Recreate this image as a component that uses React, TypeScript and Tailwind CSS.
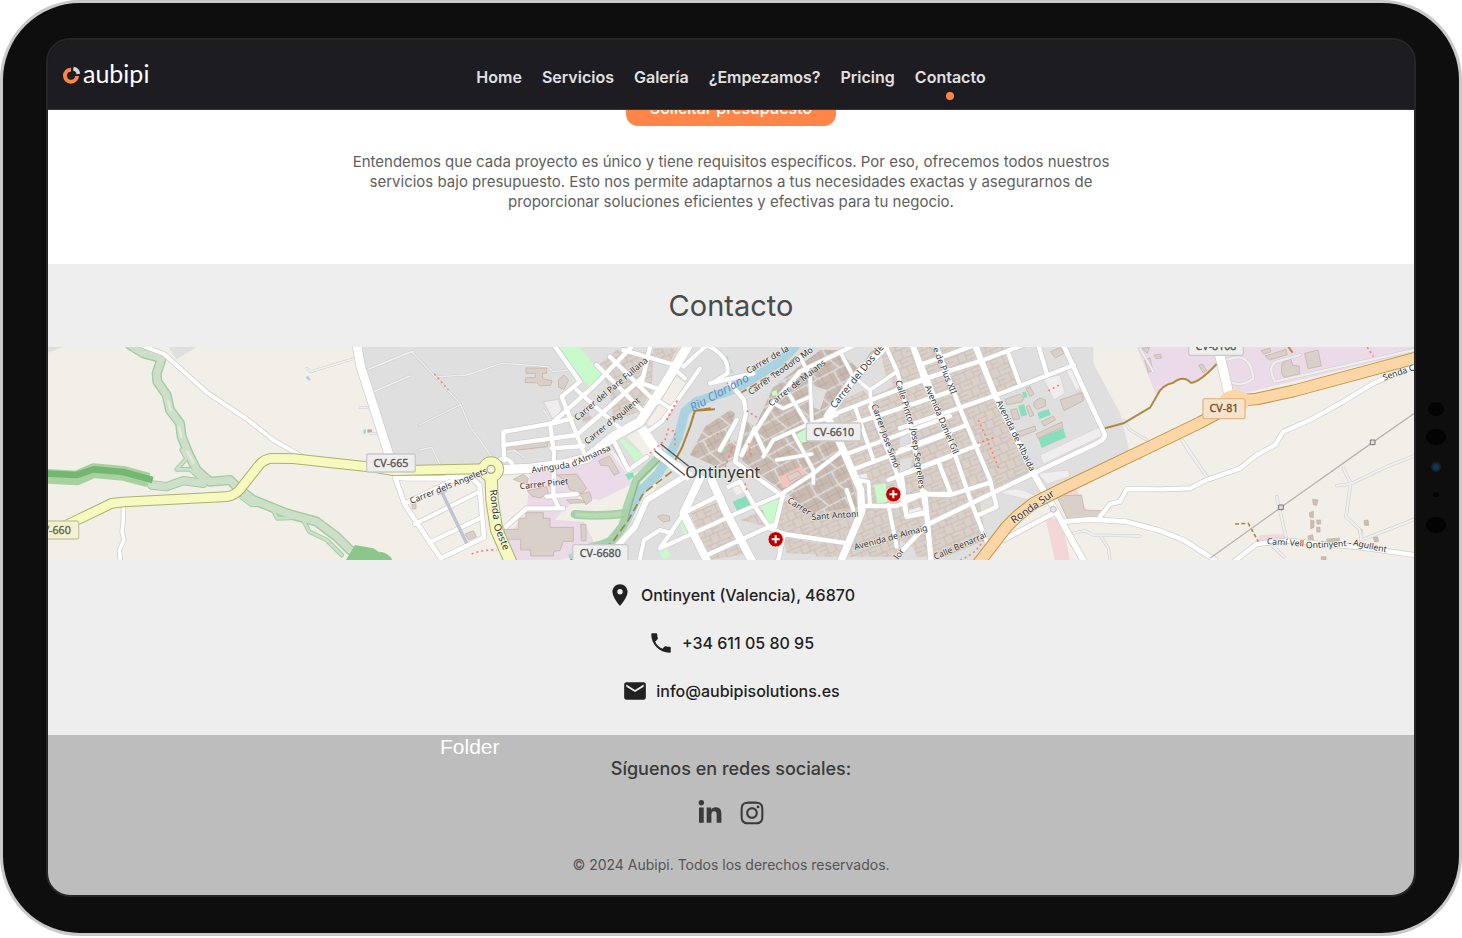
import { FaInstagram, FaLinkedinIn } from "react-icons/fa";
import { MdEmail, MdLocationOn, MdPhone } from "react-icons/md";

const navLinks = [
  { label: "Home", href: "#home" },
  { label: "Servicios", href: "#servicios" },
  { label: "Galería", href: "#galeria" },
  { label: "¿Empezamos?", href: "#empezamos" },
  { label: "Pricing", href: "#pricing" },
  { label: "Contacto", href: "#contacto" },
];

const contactItems = [
  {
    icon: MdLocationOn,
    label: "Ontinyent (Valencia), 46870",
    href: "#mapa",
  },
  { icon: MdPhone, label: "+34 611 05 80 95", href: "tel:+34611058095" },
  {
    icon: MdEmail,
    label: "info@aubipisolutions.es",
    href: "mailto:info@aubipisolutions.es",
  },
];

// The map is split in five overlapping tiles, x is where each one starts
const WEST = -24;
const MIDWEST = 996;
const CENTER = 1776;
const EAST = 2556;
const FAREAST = 3336;

type Shape = { x: number; d: string; fill: string; stroke?: string };
type Line = { x: number; d: string; w: number };

const areas: Shape[] = [
  // residential ground
  {
    x: 0,
    d: "M925 21 L1030 375 L1300 385 L1450 380 L1690 330 L1760 400 L1850 360 L1840 420 L1740 560 L1600 660 L2780 660 L2990 480 L3246 340 L3216 220 L3136 70 V21Z",
    fill: "#dfdfdf",
  },
  { x: WEST, d: "M24 21 H70 L24 38Z M385 21 H470 L410 58Z", fill: "#dfdfdf" },
  // fields inside the town
  { x: MIDWEST, d: "M740 290 L790 262 L840 320 L800 355Z M850 180 L890 110 L915 130 L840 260 L800 250Z", fill: "#f2efe9" },
  { x: CENTER, d: "M60 190 L105 110 L135 130 L50 260 L22 255Z", fill: "#f2efe9" },
  { x: EAST, d: "M260 640 L340 580 L450 500 L440 540 L550 660 H240Z", fill: "#f2efe9" },
  // industrial
  {
    x: MIDWEST,
    d: "M450 400 L690 335 L760 430 L660 480 L600 470 L545 515 L525 540 L610 545 L640 600 L620 640 L540 660 H390 L370 600 L440 520Z",
    fill: "#ebdbe8",
  },
  { x: FAREAST, d: "M-70 21 L-12 165 L10 140 L60 118 L100 128 L170 72 L190 155 L250 160 L770 35 V21Z", fill: "#ebdbe8" },
  // parks
  { x: MIDWEST, d: "M535 21 H600 L672 110 L628 142Z M718 300 L728 296 L795 350 L768 366Z M838 635 L858 625 L872 645 L850 658Z", fill: "#c8facc" },
  { x: EAST, d: "M205 255 L265 230 L330 375 L265 402Z M130 540 L175 520 L205 600 L155 612Z", fill: "#c8facc" },
  // retail and hospitals
  { x: EAST, d: "M435 530 L485 540 L510 660 H465Z M500 445 L530 450 L560 510 L490 500Z", fill: "#f3d6d6" },
  { x: FAREAST, d: "M300 585 L378 582 V600 L292 607Z", fill: "#f3d6d6" },
  // light car parks
  {
    x: EAST,
    d: "M420 345 L600 260 L612 285 L430 372Z M300 458 Q350 430 410 470 L395 482Z M415 400 L505 390 L510 410 L440 432Z M430 115 L480 105 L495 160 L462 180Z M497 90 L515 85 L540 140 L530 155Z",
    fill: "#eeeeee",
    stroke: "#e0cfcf",
  },
  { x: MIDWEST, d: "M490 185 L535 178 L545 210 L520 240Z", fill: "#eeeeee", stroke: "#d5c5c5" },
];

const denseAreas: Shape[] = [
  { x: EAST, d: "M-220 200 L-40 120 L-60 21 H325 L360 130 L290 165 L395 395 L240 480 L255 600 L140 650 H-255 L-185 500Z", fill: "url(#blocks)" },
  { x: CENTER, d: "M150 520 L240 480 L330 640 L210 660Z M300 540 L430 480 L640 520 L600 600 L430 580 L380 560Z M430 590 L600 620 L590 645 L440 640Z", fill: "url(#blocks)" },
  { x: MIDWEST, d: "M655 75 L710 30 L820 40 L815 150 L780 215 L700 240 L690 150Z M600 225 L625 215 L640 240 L610 250Z", fill: "url(#blocks)" },
  { x: MIDWEST, d: "M820 25 H895 L870 65 L820 50Z", fill: "url(#blocks)" },
  { x: CENTER, d: "M150 345 L195 260 L270 210 L345 260 L400 140 L540 30 H740 L560 210 L600 300 L655 500 L520 520 L430 455 L290 350 L240 385Z", fill: "url(#oldtown)" },
];

const overTown: Shape[] = [
  { x: CENTER, d: "M500 130 L560 150 L540 210 L515 200Z M600 40 L640 21 H700 L660 90Z M660 140 L750 100 L760 140 L690 170Z M290 190 L330 210 L300 310 L270 300Z M350 480 L400 460 L370 500 L330 500Z", fill: "#dfdfdf" },
  { x: EAST, d: "M330 50 L415 25 L435 95 L360 130Z M0 280 L30 275 L38 310 L0 325Z M0 360 L38 350 L30 390 L0 400Z M0 600 L40 625 L55 660 H0Z", fill: "#dfdfdf" },
  { x: CENTER, d: "M465 285 L500 265 V305 L478 310Z M365 500 L420 475 L405 555 L380 545Z M702 435 L738 430 L742 485 L712 490Z M115 545 L125 540 L150 590 L138 595Z M395 155 L410 150 L412 165 L398 168Z M60 635 L75 622 L92 640 L80 655Z", fill: "#c8facc" },
  { x: CENTER, d: "M278 485 L330 463 L345 500 L295 520Z M240 325 L255 322 L256 336 L242 337Z", fill: "#88dfbd" },
  { x: EAST, d: "M415 295 L490 265 L498 292 L425 324Z M412 218 L446 207 L452 225 L418 238Z M354 198 L372 192 L382 225 L364 230Z M366 157 L378 153 L382 172 L371 173Z", fill: "#88dfbd" },
  { x: CENTER, d: "M420 410 L485 378 L495 402 L440 440 L428 445Z", fill: "#f5c4c0" },
  { x: CENTER, d: "M440 408 L475 392 L484 405 L450 425Z", fill: "#d9d0c9", stroke: "#c0ac9f" },
  { x: MIDWEST, d: "M736 402 L760 396 L762 412 L744 420Z", fill: "#88dfbd" },
  { x: CENTER, d: "M275 440 L310 425 L322 452 L290 466Z M655 405 L680 400 L682 415 L660 420Z M795 515 L840 500 L848 512 L805 528Z", fill: "#eeeeee" },
  { x: EAST, d: "M485 178 L548 150 L552 162 L490 188Z", fill: "#d5d5e2" },
];

const buildings: Shape[] = [
  {
    x: MIDWEST,
    d: "M438 84 H500 V100 H488 V116 L516 122 L512 136 L480 138 L470 128 L436 128 V114 L466 112 V100 H438Z M535 120 L552 105 L566 120 L552 148 L536 142Z M378 320 L485 303 L505 306 L502 320 L380 334Z M400 418 L430 402 L445 415 L440 434Z M442 452 L500 440 L505 460 L480 474 L455 468Z M530 405 L590 402 L620 445 L605 460 L568 448 L560 425Z M600 462 L628 455 L636 480 L618 494Z M656 362 L688 348 L718 398 L702 406 L686 378 L662 376Z",
    fill: "#d9d0c9",
  },
  {
    x: MIDWEST,
    d: "M438 518 H490 V535 H510 V562 H580 V604 H550 L540 632 L522 634 L520 648 H452 V630 H422 V598 H372 V568 H415 V535 H438Z M602 553 H618 V602 H604Z M696 315 L708 310 L745 370 L732 378Z M560 480 L600 478 L615 488 L570 490Z M832 530 L848 524 L868 528 L870 542 L850 546Z M255 582 L280 572 L290 590 L266 600Z M96 492 L108 490 V506 L98 507Z",
    fill: "#d9d0c9",
  },
  {
    x: EAST,
    d: "M315 178 L360 162 L372 174 L365 186 L320 194Z M378 145 L390 140 L402 162 L390 170Z M402 185 L420 174 L436 180 V198 L412 208 L402 200Z M378 200 L388 196 L402 225 L390 231Z M332 210 L350 206 L360 236 L340 240Z M424 245 L460 228 L466 240 L432 258Z M408 282 L485 246 L488 262 L414 295Z M480 180 L548 158 L550 182 L492 212Z M452 35 L480 22 L492 40 L466 54Z M340 280 L405 258 L408 272 L345 295Z M725 25 L748 22 L742 40Z M734 60 L750 54 L758 92 L745 98Z M762 45 L782 42 L784 54 L768 56Z M470 468 L545 465 L552 510 L605 512 L608 530 L505 542Z",
    fill: "#d9d0c9",
  },
  {
    x: FAREAST,
    d: "M366 70 L392 56 L398 76 L418 78 V102 L372 112 L364 98Z M434 40 L474 30 L484 78 L444 86Z M315 48 L378 28 L382 44 L328 60Z M304 32 L330 24 L332 36 L310 42Z M116 76 L128 72 L140 92 L130 98Z",
    fill: "#d9d0c9",
  },
  {
    x: FAREAST,
    d: "M612 542 L624 540 L626 556 L614 556Z M596 570 L606 568 V582 L598 584Z M640 592 L652 590 L656 604 L644 606Z M448 518 L460 514 V532 H450Z M452 540 L462 542 V562 L452 566Z M470 540 L482 540 V552 H471Z M458 478 L474 480 L470 496 L460 494Z M444 588 L458 584 L460 600 L446 602Z M470 562 H480 V576 H470Z M500 598 L538 594 V602 L502 606Z M484 650 H498 V660 H484Z",
    fill: "#cdbfb5",
  },
];

const whiteRoads: Line[] = [
  { x: WEST, w: 26, d: "M950 10 L962 80 L985 150 L1055 370" },
  { x: WEST, w: 12, d: "M290 10 L372 42 L435 98 L500 157 L620 237 L700 300 L790 352" },
  { x: WEST, w: 11, d: "M250 495 V540 L246 575 L252 600 L238 630 L242 670" },
  // west streets
  { x: MIDWEST, w: 14, d: "M200 410 H270 L298 435 L312 592 L182 655 L75 495 L45 412 L80 415 H200" },
  { x: MIDWEST, w: 12, d: "M75 490 L225 418 M105 552 L292 458 M148 608 L305 532" },
  { x: MIDWEST, w: 13, d: "M372 362 L370 276 L515 250 L640 140 L760 15" },
  { x: MIDWEST, w: 13, d: "M370 315 L590 285 L660 225 L790 110 M515 325 L610 318 M510 250 L522 340 L520 470 L537 505 M550 505 H440 L378 560 M500 470 L590 462" },
  { x: MIDWEST, w: 13, d: "M545 170 L617 352 M545 170 L600 125 L522 15 M575 235 L520 250 M590 150 L720 265 M650 75 L790 215 M690 50 L830 190 M730 30 L895 78 M810 21 L785 130 L830 145 M700 300 L745 390 L800 352" },
  { x: MIDWEST, w: 12, d: "M360 358 Q390 350 400 380" },
  { x: MIDWEST, w: 28, d: "M350 390 L450 385 L550 372 L620 355 L700 290 L780 245 L850 140 L925 15" },
  { x: MIDWEST, w: 18, d: "M905 415 L800 480 L765 560 L710 620" },
  { x: CENTER, w: 12, d: "M130 80 L200 15 Q270 50 262 100 L215 130 M180 85 L120 170 L65 245 L30 270 M95 80 L135 115 M60 185 L90 205" },
  { x: CENTER, w: 12, d: "M0 655 L12 600 L60 570 L95 580 M60 625 L290 520 L420 465 L520 400 L610 330" },
  { x: CENTER, w: 24, d: "M180 415 L130 520 L205 670 M215 420 L260 520 L340 670" },
  { x: CENTER, w: 13, d: "M135 515 L60 625 M140 515 L240 465 M190 650 L400 555 M265 440 L300 425 L345 500 L390 565 L430 582 L625 610 M430 460 L405 560 M432 580 L415 660" },
  { x: CENTER, w: 13, d: "M210 130 L340 100 M270 130 L312 180 L318 220 L285 365 L430 470 M290 240 L240 330 M345 265 L305 345 M345 275 L400 190 L480 95 L645 15 M345 275 L375 340" },
  { x: CENTER, w: 11, d: "M480 50 L510 110 L515 240 M510 170 L430 205 L400 190 M440 150 L500 250 M370 350 L400 300 L500 255 L590 225 M460 280 L520 390 M410 360 L515 342 M520 390 L520 430 M600 35 L640 110 L690 150 M690 150 L770 95 M690 150 L695 210" },
  { x: CENTER, w: 22, d: "M740 15 L640 115 L562 230 L605 320 L662 450 L665 515 L600 670" },
  { x: CENTER, w: 13, d: "M575 225 L930 90 M600 265 L930 155 M620 342 L930 228 M640 388 L930 280 M745 420 L930 350 M665 498 H770 L850 462 L930 462" },
  { x: CENTER, w: 12, d: "M735 15 L772 95 L810 250 L858 520 L872 670 M645 200 L702 365 M690 200 L770 400 L800 530 L860 520 M745 495 L770 620 M690 495 L685 425 L650 420 M620 450 L640 510 M820 15 L880 160" },
  { x: EAST, w: 13, d: "M35 15 L75 130 L160 330 L215 490 L262 610 M110 20 L180 205 L270 420 L290 500 L235 525 M325 40 L358 130 M415 15 L440 100" },
  { x: EAST, w: 13, d: "M60 75 L225 15 M0 140 L245 62 L370 15 M0 265 L290 165 L522 75 M0 330 L200 255 M0 405 L235 315 M0 475 L70 462 L150 465 L270 428 M115 365 L152 460 M5 405 L20 530 L80 515 M75 455 L95 665" },
  { x: EAST, w: 14, d: "M490 15 L615 285 Q612 300 590 310 L400 400 L80 555 L-10 650" },
  { x: EAST, w: 18, d: "M225 15 L285 165 L400 400 L460 500 L555 670" },
  { x: FAREAST, w: 14, d: "M-285 545 L-210 538 L-100 545 L0 572 L70 600 L165 660 M-470 600 L-380 552 L-320 520" },
  { x: FAREAST, w: 13, d: "M-180 530 L-150 492 L-120 485 L-100 447 L0 448 L90 445 L140 420 L240 385 L290 345 L345 315 L370 275 L450 240 L550 185 L640 130 L770 75" },
  { x: FAREAST, w: 13, d: "M215 670 L290 612 L380 602 L600 622 L770 646" },
  { x: FAREAST, w: 28, d: "M178 40 L190 90 L208 170" },
];

const tracks: Line[] = [
  { x: WEST, w: 5, d: "M800 85 L812 95 L945 55 M980 90 L1100 40 L1120 35 M1000 155 L1110 108 M960 203 H990 M990 280 L1015 282" },
  { x: MIDWEST, w: 4, d: "M95 35 L240 190 L270 260 L335 350 M95 35 L0 75 M175 110 L260 105 L365 70 L505 80 L520 95 L570 90 M118 255 L240 195 M118 330 L155 322 L178 370 M490 210 L515 245 M380 335 L405 332 L432 352" },
  { x: EAST, w: 6, d: "M670 240 L690 270 L740 300 M720 355 V330 L800 280 M840 290 L870 335 L900 380 M520 580 L555 572 L580 585 L720 588 M600 585 L625 625 L630 660 M720 25 L760 95" },
  { x: FAREAST, w: 7, d: "M60 290 L90 340 L145 415 M550 385 L572 430 L558 530 L600 570 L605 610 M530 437 L572 432 L680 380 L770 345 M605 600 L770 535 M350 470 L380 600 M340 620 L372 650 M200 60 Q270 30 280 115 Q250 140 215 128 M762 30 L345 125 Q320 80 350 65 L420 45" },
];

type Label = { x: number; tx: number; ty: number; a: number; s: number; text: string };

const labels: Label[] = [
  { x: MIDWEST, tx: 592, ty: 243, a: -40, s: 26, text: "Carrer del Pare Fullana" },
  { x: MIDWEST, tx: 622, ty: 314, a: -39, s: 26, text: "Carrer d'Agullent" },
  { x: MIDWEST, tx: 456, ty: 399, a: -8, s: 26, text: "Avinguda" },
  { x: MIDWEST, tx: 579, ty: 381, a: -24, s: 26, text: "d'Almansa" },
  { x: MIDWEST, tx: 420, ty: 448, a: -6, s: 26, text: "Carrer Pinet" },
  { x: MIDWEST, tx: 94, ty: 492, a: -22, s: 26, text: "Carrer dels Angelets" },
  { x: MIDWEST, tx: 329, ty: 450, a: 83, s: 30, text: "Ronda" },
  { x: MIDWEST, tx: 340, ty: 556, a: 68, s: 30, text: "Oeste" },
  { x: CENTER, tx: 325, ty: 102, a: -30, s: 26, text: "Carrer de la" },
  { x: CENTER, tx: 332, ty: 166, a: -35, s: 26, text: "Carrer Teodoro Mo" },
  { x: CENTER, tx: 394, ty: 200, a: -38, s: 26, text: "Carrer de Maians" },
  { x: CENTER, tx: 584, ty: 207, a: -51, s: 29, text: "Carrer del Dos de" },
  { x: CENTER, tx: 694, ty: 196, a: 70, s: 26, text: "Carrer Jose Simó" },
  { x: CENTER, tx: 766, ty: 124, a: 73, s: 26, text: "Calle Pintor" },
  { x: CENTER, tx: 812, ty: 266, a: 82, s: 26, text: "Josep Segrelles" },
  { x: CENTER, tx: 440, ty: 486, a: 32, s: 26, text: "Carrer" },
  { x: CENTER, tx: 515, ty: 540, a: -4, s: 26, text: "Sant Antoni" },
  { x: CENTER, tx: 645, ty: 630, a: -15, s: 26, text: "Avenida de Almaig" },
  { x: CENTER, tx: 775, ty: 660, a: -55, s: 26, text: "lor" },
  { x: EAST, tx: 98, ty: 26, a: 68, s: 26, text: "e de Pius XII" },
  { x: EAST, tx: 74, ty: 140, a: 67, s: 26, text: "Avenida Daniel Gil" },
  { x: EAST, tx: 288, ty: 186, a: 64, s: 26, text: "Avenida de Albaida" },
  { x: EAST, tx: 342, ty: 552, a: -35, s: 31, text: "Ronda Sur" },
  { x: EAST, tx: 106, ty: 660, a: -24, s: 26, text: "Calle Benarrai" },
  { x: FAREAST, tx: 672, ty: 122, a: -19, s: 26, text: "Senda Ci" },
  { x: FAREAST, tx: 320, ty: 612, a: 4, s: 26, text: "Camí Vell" },
  { x: FAREAST, tx: 438, ty: 625, a: -3, s: 26, text: "Ontinyent -" },
  { x: FAREAST, tx: 578, ty: 616, a: 12, s: 26, text: "Agullent" },
];

type Shield = { x: number; y: number; w: number; h: number; fill: string; edge: string; color: string; text: string };

const shields: Shield[] = [
  { x: WEST + 980, y: 342, w: 146, h: 54, fill: "#eeeeee", edge: "#c9c9c9", color: "#555555", text: "CV-665" },
  { x: WEST - 36, y: 543, w: 152, h: 54, fill: "#f3f1d4", edge: "#c9caa0", color: "#67683f", text: "CV-660" },
  { x: MIDWEST + 578, y: 614, w: 166, h: 54, fill: "#eeeeee", edge: "#c9c9c9", color: "#555555", text: "CV-6680" },
  { x: CENTER + 499, y: 249, w: 164, h: 54, fill: "#eeeeee", edge: "#c9c9c9", color: "#555555", text: "CV-6610" },
  { x: FAREAST + 86, y: -8, w: 164, h: 54, fill: "#eeeeee", edge: "#c9c9c9", color: "#555555", text: "CV-8108" },
  { x: FAREAST + 129, y: 176, w: 126, h: 60, fill: "#f7e2cb", edge: "#e0b98c", color: "#725025", text: "CV-81" },
];

const hospitals = [
  { cx: CENTER + 407, cy: 598 },
  { cx: CENTER + 760, cy: 463 },
];

const Shapes = ({ items }: { items: Shape[] }) => (
  <>
    {items.map((el, i) => (
      <path
        key={i}
        d={el.d}
        transform={`translate(${el.x} 0)`}
        fill={el.fill}
        stroke={el.stroke}
        strokeWidth={el.stroke ? 2 : undefined}
      />
    ))}
  </>
);

// every casing goes below every road so that the crossings stay open
const Roads = ({ items, casing, color, edge }: { items: Line[]; casing: string; color: string; edge: number }) => (
  <g fill="none" strokeLinejoin="round" strokeLinecap="round">
    {items.map((el, i) => (
      <path key={`c${i}`} d={el.d} transform={`translate(${el.x} 0)`} stroke={casing} strokeWidth={el.w + edge} />
    ))}
    {items.map((el, i) => (
      <path key={`r${i}`} d={el.d} transform={`translate(${el.x} 0)`} stroke={color} strokeWidth={el.w} />
    ))}
  </g>
);

const TownMap = () => {
  const river = "M1480 15 L1430 65 L1300 145 L1180 185 L1145 215 L1125 290 L1100 345 L1065 400 L1010 455 L970 540 L930 600 L800 658";
  const stream =
    "M270 15 L310 40 L365 55 L350 100 L352 125 L380 165 L390 210 L420 250 L425 290 L445 340 L470 390 L510 425 L570 420 L600 450 L640 480 L740 520 L830 545 L890 590 L930 630 L990 660";
  const yellow = "M20 575 L80 555 L215 490 L250 486 L560 470 Q585 466 600 448 L655 378 Q672 355 700 355 L760 356 L1000 382 L1060 392 L1350 386";
  const rondaOeste = "M333 400 L336 480 L350 570 L398 680";
  const orange = "M-560 690 L-460 560 L-430 530 L-380 490 L-300 450 L-40 325 L120 248 L200 205 Q235 178 290 177 L400 153 L775 52";

  return (
    <svg
      id="mapa"
      role="img"
      aria-label="Mapa de Ontinyent"
      viewBox="0 21 4098 639"
      preserveAspectRatio="xMidYMid slice"
      className="block h-[213px] w-full bg-[#f2efe9]"
    >
      <defs>
        <pattern id="blocks" width="62" height="54" patternUnits="userSpaceOnUse" patternTransform="rotate(-23)">
          <rect width="62" height="54" fill="#d9d0c9" />
          <path d="M0 1 H62 M0 27 H62 M14 0 V27 M38 0 V27 M24 27 V54 M50 27 V54 M38 14 H62 M0 40 H24" stroke="#c3b3a8" strokeWidth="2" fill="none" />
        </pattern>
        <pattern id="oldtown" width="74" height="88" patternUnits="userSpaceOnUse" patternTransform="rotate(-28)">
          <rect width="74" height="88" fill="#c8bab0" />
          <path d="M0 2 H74 M26 2 V46 L44 88 M0 46 H74" stroke="#dedede" strokeWidth="5" fill="none" />
          <path d="M10 2 V46 M42 2 V46 M58 2 V30 M14 46 V88 M56 46 V88 M26 24 H74 M0 66 H34 M44 66 H74" stroke="#b5a397" strokeWidth="2" fill="none" />
        </pattern>
      </defs>

      <Shapes items={areas} />
      <Shapes items={denseAreas} />
      <Shapes items={overTown} />
      <g stroke="#c0ac9f" strokeWidth="2">
        <Shapes items={buildings} />
      </g>

      {/* streams and woods on the west side */}
      <g transform={`translate(${WEST} 0)`} fill="none" strokeLinejoin="round" strokeLinecap="round">
        <path d="M425 330 L440 355 L410 388 L450 388 L485 420 M605 472 L635 495 L690 492 L712 535 L785 532 L808 575 L860 600 L905 645" stroke="#a5d0a5" strokeWidth="14" />
        <path d={stream} stroke="#9fcda0" strokeWidth="30" />
        <path d="M335 435 L380 440 L430 422 L490 430" stroke="#9fcda0" strokeWidth="28" />
        <path d="M425 330 L440 355 L410 388 L450 388 L485 420 M605 472 L635 495 L690 492 L712 535 L785 532 L808 575 L860 600 L905 645" stroke="#cddfc8" strokeWidth="8" />
        <path d={stream} stroke="#cddfc8" strokeWidth="22" />
        <path d="M335 435 L380 440 L430 422 L490 430" stroke="#cddfc8" strokeWidth="22" />
        <path d="M385 185 L392 210 M418 262 L424 290 M442 335 L460 368" stroke="#e4e9dc" strokeWidth="8" />
        <path d="M0 408 L110 414 L160 392 L250 400 L325 420" stroke="#a9d19f" strokeWidth="44" strokeLinecap="butt" />
        <path d="M0 400 L110 405 L160 388 L250 396 L338 420" stroke="#74b772" strokeWidth="20" strokeLinecap="butt" />
        <path d="M945 615 L1000 625 L1060 665 H915Z" fill="#8cc68a" />
        <path d="M802 112 L808 118 M974 272 V278" stroke="#aad3df" strokeWidth="8" />
        <path d="M982 268 H996 V278 H982Z" fill="#c9a9a0" />
      </g>

      <g transform={`translate(${MIDWEST} 0)`} fill="none" strokeLinecap="round">
        <path d="M585 523 Q660 530 740 520" stroke="#a5d0a5" strokeWidth="26" />
        <path d="M592 524 Q660 531 730 521" stroke="#b9dab3" strokeWidth="14" />
        <path d="M0 635 Q30 640 38 662 H0Z" fill="#8cc68a" />
      </g>
      <g transform={`translate(${CENTER - 1010} 0)`} fill="none" strokeLinejoin="round">
        <path d={river} stroke="#aad3df" strokeWidth="28" />
        <path d="M1085 335 L1000 420 L972 500 L958 560 L915 610 L860 622" stroke="#a5d0a5" strokeWidth="26" opacity="0.85" />
        <path d="M1080 350 L1005 425 L975 530" stroke="#88bb90" strokeWidth="4" />
        <path d="M1480 50 L1430 90 L1310 160 M1105 395 L1020 460 L975 540 L925 610 L800 662" stroke="#a8833c" strokeWidth="5" strokeDasharray="24 12" />
        <path d="M1235 208 L1175 212 L1160 260 L1135 325 L1110 370 M1175 212 L1222 205" stroke="#a8833c" strokeWidth="6" />
        <path d="M1270 50 L1290 110" stroke="#aad3df" strokeWidth="5" strokeDasharray="12 8" />
      </g>

      <Roads items={tracks} casing="#cccccc" color="#efefef" edge={3} />
      <Roads items={whiteRoads} casing="#cbcbcb" color="#ffffff" edge={4} />

      {/* bridge over the river */}
      <g transform={`translate(${CENTER} 0)`} fill="none">
        <path d="M5 265 L55 340 L150 412" stroke="#ffffff" strokeWidth="28" strokeLinejoin="round" />
        <path d="M44 332 L135 406 M62 312 L150 382" stroke="#555555" strokeWidth="4" />
      </g>

      {/* CV-665, Ronda Oeste and the roundabout */}
      <g fill="none" strokeLinejoin="round">
        <path d={yellow} transform={`translate(${WEST} 0)`} stroke="#adb06c" strokeWidth="32" />
        <path d={rondaOeste} transform={`translate(${MIDWEST} 0)`} stroke="#adb06c" strokeWidth="40" />
        <circle cx={MIDWEST + 333} cy="388" r="38" fill="#f7fabf" stroke="#adb06c" strokeWidth="3" />
        <path d={yellow} transform={`translate(${WEST} 0)`} stroke="#f7fabf" strokeWidth="26" />
        <path d={rondaOeste} transform={`translate(${MIDWEST} 0)`} stroke="#f7fabf" strokeWidth="34" />
        <circle cx={MIDWEST + 333} cy="388" r="12" fill="#f2efe9" stroke="#adb06c" strokeWidth="4" />
      </g>

      {/* CV-81 and Ronda Sur */}
      <g transform={`translate(${FAREAST} 0)`} fill="none" strokeLinejoin="round">
        <path d={orange} stroke="#c2964a" strokeWidth="38" />
        <path d={orange} stroke="#fcd6a4" strokeWidth="32" />
        <path d="M182 168 Q205 145 240 152 L270 166 L262 205 L170 220Z" fill="#fcd6a4" />
        <path d="M-165 265 L-110 250 L-30 203 L-8 165 Q5 135 40 128 Q70 105 92 128 Q115 130 170 72" stroke="#b08a45" strokeWidth="6" />
        <path d="M225 552 L265 550 L295 605" stroke="#b8873a" strokeWidth="5" strokeDasharray="12 7" />
        <path d="M385 21 L398 38" stroke="#b8873a" strokeWidth="6" />
        <path d="M150 655 L363 502 L638 307 L770 215" stroke="#b5b5b5" strokeWidth="4" />
        <path d="M356 495 h14 v14 h-14Z M631 300 h14 v14 h-14Z" stroke="#777777" strokeWidth="3" fill="#dddddd" />
      </g>
      <circle cx={EAST + 460} cy="508" r="9" fill="#e5e5e5" stroke="#bdbdbd" strokeWidth="3" />

      {/* footpaths */}
      <g fill="none" stroke="#fa8072" strokeWidth="5" strokeDasharray="6 9">
        <path d="M163 102 L205 150 M275 642 Q310 628 350 630 M860 240 L895 175 M810 340 L855 300 L865 268 L885 275 V320" transform={`translate(${MIDWEST} 0)`} />
        <path d="M80 240 L115 175 M320 212 L355 235 M255 380 L280 315 M325 310 L335 350 M315 430 L320 450 M230 280 L240 290 M460 470 L466 485" transform={`translate(${CENTER} 0)`} />
        <path d="M235 240 L262 300 L298 390 M232 310 L285 292 M180 660 Q230 640 250 600 M445 152 L482 133" transform={`translate(${EAST} 0)`} />
        <path d="M622 21 L640 50" transform={`translate(${FAREAST} 0)`} />
      </g>
      <path d="M185 455 L260 610 M172 462 L200 450" transform={`translate(${MIDWEST} 0)`} stroke="#bfc3cf" strokeWidth="10" />

      {shields.map((el) => (
        <g key={el.text}>
          <rect x={el.x} y={el.y} width={el.w} height={el.h} rx="6" fill={el.fill} stroke={el.edge} strokeWidth="4" />
          <text
            x={el.x + el.w / 2}
            y={el.y + el.h / 2 + 11}
            textAnchor="middle"
            fontSize="32"
            fill={el.color}
            stroke={el.color}
            strokeWidth="1"
            fontFamily="Noto Sans, sans-serif"
          >
            {el.text}
          </text>
        </g>
      ))}

      <g fontFamily="Noto Sans, sans-serif" fill="#333333" stroke="#ffffff" strokeOpacity="0.6" strokeWidth="4" strokeLinejoin="round" paintOrder="stroke">
        {labels.map((el) => (
          <text key={el.text} fontSize={el.s} transform={`translate(${el.x + el.tx} ${el.ty}) rotate(${el.a})`}>
            {el.text}
          </text>
        ))}
        <text fontSize="36" fontStyle="italic" fill="#5e8fc7" stroke="none" transform={`translate(${CENTER + 158} 216) rotate(-29)`}>
          Riu Clariano
        </text>
        <text fontSize="48" x={CENTER + 136} y="413">
          Ontinyent
        </text>
      </g>

      {hospitals.map((el) => (
        <g key={el.cx}>
          <circle cx={el.cx} cy={el.cy} r="23" fill="#bf0000" stroke="#f0d5d5" strokeWidth="3" />
          <path d={`M${el.cx - 12} ${el.cy} h24 M${el.cx} ${el.cy - 12} v24`} stroke="#ffffff" strokeWidth="6" />
        </g>
      ))}
    </svg>
  );
};

const Logo = () => (
  <a href="#home" aria-label="aubipi" className="flex items-center gap-[2px] text-white">
    <svg viewBox="0 0 54 54" className="h-[18px] w-[18px]" fill="none">
      <path d="M24 11 A18 18 0 1 0 42 30" stroke="#ff8548" strokeWidth="12" />
      <path d="M31 8 A18 18 0 0 1 46 24" stroke="#d8d8d8" strokeWidth="11" />
    </svg>
    <span className="pb-1 font-['Lato'] text-[25px] leading-8">aubipi</span>
  </a>
);

const Header = () => (
  <header className="relative z-10 grid h-[70px] grid-cols-[1fr_auto_1fr] items-center border-b border-[#34343a] bg-[#1d1c21] px-[15px]">
    <Logo />
    <nav className="flex gap-5 pt-1">
      {navLinks.map((el) => (
        <a key={el.label} href={el.href} className="relative text-base leading-6 font-semibold text-[#e2e0e2]">
          {el.label}
          {el.label === "Contacto" && (
            <span className="absolute top-[27px] left-1/2 -ml-1 h-2 w-2 rounded-full bg-[#ff8548]"></span>
          )}
        </a>
      ))}
    </nav>
  </header>
);

const Budget = () => (
  <section className="flex flex-col items-center bg-white pb-[52px]">
    <button className="-mt-5 h-9 w-[210px] rounded-xl bg-[#ff8548] text-base font-medium text-white">
      Solicitar presupuesto
    </button>
    <p className="mt-[26px] max-w-[780px] text-center text-[15px] leading-5 text-[#5f5f5f]">
      Entendemos que cada proyecto es único y tiene requisitos específicos. Por eso, ofrecemos todos nuestros
      <br />
      servicios bajo presupuesto. Esto nos permite adaptarnos a tus necesidades exactas y asegurarnos de
      <br />
      proporcionar soluciones eficientes y efectivas para tu negocio.
    </p>
  </section>
);

const Contact = () => (
  <section id="contacto" className="bg-[#eeeeee]">
    <h2 className="pt-6 pb-[23px] text-center text-[29px] leading-9 text-[#4a4a4a]">Contacto</h2>
    <TownMap />
    <ul className="flex flex-col items-center gap-5 pt-[21px] pb-[30px]">
      {contactItems.map((el) => (
        <li key={el.label}>
          <a href={el.href} className="flex h-7 items-center gap-2 text-base font-medium text-[#212121]">
            <el.icon size={26} />
            {el.label}
          </a>
        </li>
      ))}
    </ul>
  </section>
);

const Footer = () => (
  <footer className="relative flex flex-col items-center bg-[#bdbdbd] py-5">
    <span className="absolute top-0 left-[392px] font-['Liberation_Sans'] text-[21px] leading-6 text-white">Folder</span>
    <h3 className="text-[18px] leading-7 font-medium text-[#3a3a3a]">Síguenos en redes sociales:</h3>
    <div className="mt-[17px] flex gap-4 text-[#3a3a3a]">
      <a href="#linkedin" aria-label="LinkedIn">
        <FaLinkedinIn size={26} />
      </a>
      <a href="#instagram" aria-label="Instagram">
        <FaInstagram size={26} />
      </a>
    </div>
    <p className="mt-[29px] text-[14px] leading-5 text-[#555555]">© 2024 Aubipi. Todos los derechos reservados.</p>
  </footer>
);

const Cameras = () => (
  <div className="absolute top-[399px] right-[13px] flex w-5 flex-col items-center">
    <span className="h-[14px] w-4 rounded-[50%] bg-[#030303]"></span>
    <span className="mt-[13px] h-4 w-5 rounded-[50%] bg-[#030303]"></span>
    <span className="mt-[17px] flex h-2.5 w-2.5 items-center justify-center rounded-full bg-[#1c2228]">
      <span className="h-1.5 w-1.5 rounded-full bg-[#0c3a5c]"></span>
    </span>
    <span className="mt-5 h-[5px] w-1.5 rounded-full bg-[#030303]"></span>
    <span className="mt-5 h-4 w-5 rounded-[50%] bg-[#030303]"></span>
  </div>
);

const App = () => {
  return (
    <div className="bg-white font-['Inter',sans-serif]">
      <div className="relative rounded-[80px] border-[3px] border-[#c8c9c8] bg-[#0e0e0e] px-[45px] pt-[37px] pb-[38px]">
        <div className="overflow-hidden rounded-[22px] outline-2 outline-[#262626]">
          <Header />
          <main>
            <Budget />
            <Contact />
          </main>
          <Footer />
        </div>
        <Cameras />
      </div>
    </div>
  );
};

export default App;
